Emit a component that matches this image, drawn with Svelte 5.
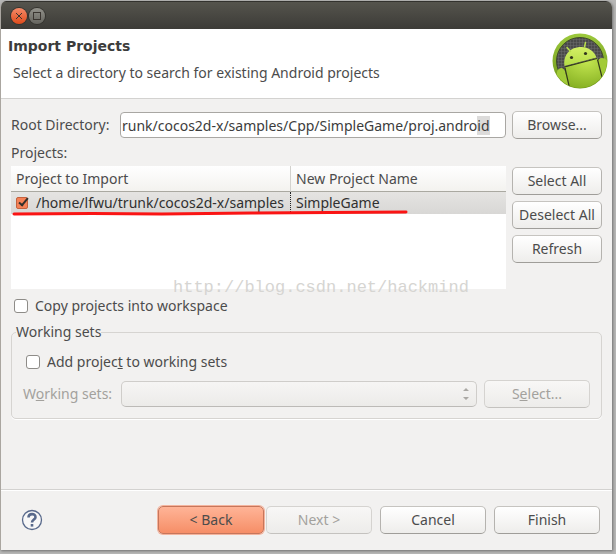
<script>
  import { onMount } from 'svelte';

  let rootDir = $state('runk/cocos2d-x/samples/Cpp/SimpleGame/proj.android');
  let projects = $state([
    { checked: true, path: '/home/lfwu/trunk/cocos2d-x/samples', name: 'SimpleGame' },
  ]);
  let copyProjects = $state(false);
  let addToSets = $state(false);
  let rootInput;

  // Keep the tail of the path in view, like the native entry does.
  onMount(() => {
    rootInput.focus();
    rootInput.setSelectionRange(rootDir.length - 2, rootDir.length);
    rootInput.scrollLeft = rootInput.scrollWidth;
  });

  function setAll(checked) {
    for (const p of projects) p.checked = checked;
  }
</script>

<div class="desktop">
  <div class="window">
    <div class="titlebar">
      <button class="wm close" aria-label="Close">
        <svg viewBox="0 0 16 16"><path d="M5 5l6 6M11 5l-6 6" /></svg>
      </button>
      <button class="wm" aria-label="Maximize">
        <svg viewBox="0 0 16 16"><rect x="4.5" y="4.5" width="7" height="7" /></svg>
      </button>
    </div>

    <header>
      <div class="heading">
        <h1>Import Projects</h1>
        <p>Select a directory to search for existing Android projects</p>
      </div>
      <svg class="logo" viewBox="0 0 56 56" aria-hidden="true">
        <defs>
          <linearGradient id="ring" x1="0" y1="0" x2="0" y2="1">
            <stop offset="0" stop-color="#9cc93c" />
            <stop offset="1" stop-color="#6d9417" />
          </linearGradient>
          <linearGradient id="head" x1="0" y1="0" x2="0" y2="1">
            <stop offset="0" stop-color="#d3f065" />
            <stop offset="1" stop-color="#b4dc45" />
          </linearGradient>
          <radialGradient id="torso" cx="0.5" cy="0.1" r="0.9">
            <stop offset="0" stop-color="#c3e650" />
            <stop offset="1" stop-color="#86b022" />
          </radialGradient>
          <pattern id="mesh" width="3" height="3" patternUnits="userSpaceOnUse">
            <rect width="3" height="3" fill="#4a4a4a" />
            <path d="M0 0h3M0 0v3" stroke="#6c6c6c" stroke-width="1" />
          </pattern>
          <clipPath id="disc"><circle cx="28" cy="28" r="27" /></clipPath>
        </defs>
        <circle cx="28" cy="28" r="27.5" fill="url(#ring)" />
        <circle cx="28" cy="28" r="23.5" fill="url(#mesh)" stroke="#3f4a2a" />
        <g clip-path="url(#disc)">
          <path d="M13 34L45 25L56 44V56H16z" fill="url(#torso)" />
          <path d="M5 39Q6 35 10 35Q12 36 13 38L18 56H4z" fill="#a2cb38" />
          <path d="M46 30Q46 25 50 25Q54 25 56 29V50H51z" fill="#a2cb38" />
          <path d="M12.500 33C11 24 16 16 25 14.500C34 12.500 42 17 44.500 24.500z" fill="url(#head)" />
          <path d="M18.500 18.500L15 14.500M32.500 14L33.500 9.500" stroke="#b9df4b" stroke-width="1.5" stroke-linecap="round" />
          <circle cx="19.500" cy="24.500" r="1.6" fill="#30351d" />
          <circle cx="33.500" cy="20.500" r="1.6" fill="#30351d" />
          <path d="M12.500 34L45 25.500M13 35L17.500 55M45.500 26.500L50.500 46" fill="none" stroke="#333a1b" stroke-width="1.2" />
        </g>
      </svg>
    </header>

    <main>
      <div class="split">
        <div class="root">
          <label for="root-dir">Root Directory:</label>
          <input id="root-dir" type="text" bind:this={rootInput} bind:value={rootDir} />
        </div>
        <button class="btn">Browse...</button>
      </div>

      <div class="caption">Projects:</div>

      <div class="split">
        <div class="list">
          <table>
            <thead>
              <tr><th class="path">Project to Import</th><th>New Project Name</th></tr>
            </thead>
            <tbody>
              {#each projects as p}
                <tr>
                  <td class="path">
                    <label>
                      <input class="cell-check" type="checkbox" bind:checked={p.checked} />
                      <span>{p.path}</span>
                    </label>
                  </td>
                  <td>{p.name}</td>
                </tr>
              {/each}
            </tbody>
          </table>
          <svg class="marker" viewBox="0 0 396 6" preserveAspectRatio="none" aria-hidden="true">
            <path d="M2 4L80 3.500L150 4L240 3L394 2" />
          </svg>
          <div class="watermark">http://blog.csdn.net/hackmind</div>
        </div>
        <div class="side">
          <button class="btn" onclick={() => setAll(true)}>Select All</button>
          <button class="btn" onclick={() => setAll(false)}>Deselect All</button>
          <button class="btn">Refresh</button>
        </div>
      </div>

      <label class="check copy">
        <input type="checkbox" bind:checked={copyProjects} />
        Copy projects into workspace
      </label>

      <fieldset>
        <legend>Working sets</legend>
        <label class="check">
          <input type="checkbox" bind:checked={addToSets} />
          <span>Add projec<u>t</u> to working sets</span>
        </label>
        <div class="sets">
          <label for="sets">W<u>o</u>rking sets:</label>
          <div class="combo">
            <select id="sets" disabled={!addToSets}><option></option></select>
            <svg viewBox="0 0 8 14" aria-hidden="true"><path d="M1 4l3-3 3 3zM1 10l3 3 3-3z" /></svg>
          </div>
          <button class="btn wide" disabled={!addToSets}><span>S<u>e</u>lect...</span></button>
        </div>
      </fieldset>
    </main>

    <footer>
      <button class="help" aria-label="Help">
        <svg viewBox="0 0 22 22">
          <circle cx="11" cy="11" r="9.500" />
          <path d="M7.500 8.500C7.500 4 14.500 4 14.500 8.200C14.500 10.600 11 10.600 11 13.500" />
          <path d="M11 15v2.600" />
        </svg>
      </button>
      <div class="nav">
        <button class="btn wide default">&lt; Back</button>
        <button class="btn wide" disabled>Next &gt;</button>
      </div>
      <button class="btn wide">Cancel</button>
      <button class="btn wide">Finish</button>
    </footer>
  </div>
</div>

<style>
  :global(body) { background: #b5b4b2; }

  .desktop {
    min-height: 100vh;
    box-sizing: border-box;
    padding: 1px 4px 4px 0;
    display: flex;
    background: #b8b8b7;
    font: 14px/20px "Noto Sans", "Open Sans", sans-serif;
    color: #4c4c4c;
  }
  .window {
    flex: 1;
    min-width: 0;
    display: flex;
    flex-direction: column;
    background: #f2f1f0;
    border-left: 1px solid #aaa6a0;
    border-radius: 6px 6px 0 0;
    box-shadow: 1px 1px 3px #6e6e6e;
    overflow: hidden;
  }
  button, input, select { font: inherit; color: inherit; margin: 0; }

  .titlebar {
    display: flex;
    align-items: center;
    gap: 2px;
    height: 28px;
    padding-left: 10px;
    box-sizing: border-box;
    background: linear-gradient(#55544d, #3c3b37);
    border-top: 1px solid #33322e;
  }
  .wm {
    width: 16px;
    height: 16px;
    padding: 0;
    border: 0;
    border-radius: 50%;
    background: linear-gradient(#92918a, #65645e);
    box-shadow: 0 0 0 1px #35342f;
  }
  .wm.close { background: linear-gradient(#f58a68, #df4b1b); }
  .wm svg { display: block; fill: none; stroke: #3a3530; stroke-width: 1; }

  header {
    display: flex;
    justify-content: space-between;
    height: 69px;
    background: #fff;
    border-bottom: 1px solid #d3d2d0;
  }
  .heading { padding: 7px 0 0 7px; }
  h1 {
    margin: 0;
    font: bold 14px/20px "DejaVu Sans", sans-serif;
    color: #3c3c3c;
  }
  p { margin: 7px 0 0 5px; }
  .logo { width: 56px; height: 56px; margin: 4px 4px 0 0; }

  main { flex: 1; padding: 12px 10px 0; }
  .split { display: flex; gap: 6px; }
  .split > .btn, .side { width: 90px; flex: none; }
  .root { flex: 1; min-width: 0; display: flex; align-items: center; gap: 6px; }
  .root label { flex: none; min-width: 103px; }
  .root input {
    flex: 1;
    min-width: 0;
    height: 26px;
    box-sizing: border-box;
    padding: 0 4px 0 1px;
    border: 1px solid #a9a7a3;
    border-radius: 4px;
    background: #fff;
    color: #3c3c3c;
    outline: 0;
  }
  .root input::selection { background: #dcdbda; color: #3c3c3c; }
  .caption { padding: 4px 0 3px; }

  .list {
    position: relative;
    flex: 1;
    min-width: 0;
    height: 123px;
    background: #fff;
  }
  table { width: 100%; table-layout: fixed; border-collapse: separate; border-spacing: 0; }
  th, td {
    box-sizing: border-box;
    padding: 0 5px;
    text-align: left;
    white-space: nowrap;
    overflow: hidden;
  }
  th {
    height: 26px;
    font-weight: normal;
    background: linear-gradient(#fff, #f3f2ef);
    border-bottom: 1px solid #aaa9a1;
  }
  th.path { width: 280px; border-right: 1px solid #d3d2ce; }
  td {
    height: 22px;
    background: linear-gradient(#e5e4e2, #d8d7d5);
    color: #303030;
  }
  td.path { padding-right: 0; border-right: 1px dotted #222; }
  td label { display: flex; align-items: center; gap: 8px; overflow: hidden; }

  .marker {
    position: absolute;
    left: 1px;
    top: 44px;
    width: 80%;
    height: 6px;
  }
  .marker path {
    fill: none;
    stroke: #fa1414;
    stroke-width: 3;
    stroke-linecap: round;
  }
  .watermark {
    position: absolute;
    left: 162px;
    top: 112px;
    font: 17px/20px "Liberation Mono", monospace;
    color: #d6d5d2;
    white-space: nowrap;
  }

  .side { display: flex; flex-direction: column; gap: 6px; padding-top: 1px; }
  .btn {
    height: 28px;
    box-sizing: border-box;
    padding: 0;
    border: 1px solid #b5b3af;
    border-top-color: #c6c4c0;
    border-bottom-color: #9f9d99;
    border-radius: 5px;
    background: linear-gradient(#fff, #eeedeb);
    white-space: nowrap;
  }
  .btn.wide { width: 106px; }
  .btn:disabled {
    color: #a3a19d;
    border-color: #d5d3d0;
    border-bottom-color: #c4c2bf;
    background: linear-gradient(#f8f7f6, #edecea);
  }
  .btn.default {
    border-color: #c7765b;
    background: linear-gradient(#ffb497, #f68e67);
    box-shadow: 0 0 0 1px #f4b49e;
  }

  .check { display: flex; align-items: center; gap: 7px; }
  .check input, .cell-check {
    appearance: none;
    box-sizing: border-box;
    width: 14px;
    height: 14px;
    flex: none;
    border: 1px solid #8e8c88;
    border-radius: 3px;
    background: #fff;
  }
  .cell-check { width: 12px; height: 12px; border-color: #c4623e; border-radius: 2px; }
  .check input:checked, .cell-check:checked {
    position: relative;
    background: #f58257;
  }
  .check input:checked::after, .cell-check:checked::after {
    content: "";
    position: absolute;
    left: 4px;
    top: -2px;
    width: 3px;
    height: 8px;
    border: solid #33302c;
    border-width: 0 2px 2px 0;
    transform: rotate(40deg);
  }
  .copy { padding: 7px 0 0 3px; }

  fieldset {
    min-width: 0;
    margin: 6px 0 0;
    padding: 10px 11px;
    border: 1px solid #d6d4d1;
    border-radius: 5px;
    box-shadow: 0 1px #fff;
  }
  legend { padding: 0; margin-left: -7px; }
  fieldset .check { padding-left: 3px; }
  .sets { display: flex; align-items: center; gap: 7px; margin-top: 8px; }
  .sets label { color: #a3a19d; min-width: 91px; }
  .combo { position: relative; flex: 1; height: 26px; }
  .combo select {
    appearance: none;
    display: block;
    width: 100%;
    height: 26px;
    border: 1px solid #cfcdca;
    border-bottom-color: #bcbab7;
    border-radius: 5px;
    background: linear-gradient(#f6f5f4, #ecebe9);
    opacity: 1;
  }
  .combo svg {
    position: absolute;
    right: 7px;
    top: 6px;
    width: 8px;
    height: 14px;
    fill: #aaa8a4;
    pointer-events: none;
  }

  footer {
    display: flex;
    align-items: center;
    gap: 8px;
    height: 60px;
    padding: 0 12px 0 20px;
    border-top: 1px solid #d3d2d0;
    box-shadow: inset 0 1px #fff;
  }
  .help { padding: 0; border: 0; background: none; margin-right: auto; }
  .help svg { display: block; width: 22px; height: 22px; fill: none; stroke: #58698b; }
  .help circle { fill: #f7f7f7; stroke-width: 1.3; }
  .help path { stroke-width: 2.6; }
  .nav { display: flex; gap: 2px; }
</style>
